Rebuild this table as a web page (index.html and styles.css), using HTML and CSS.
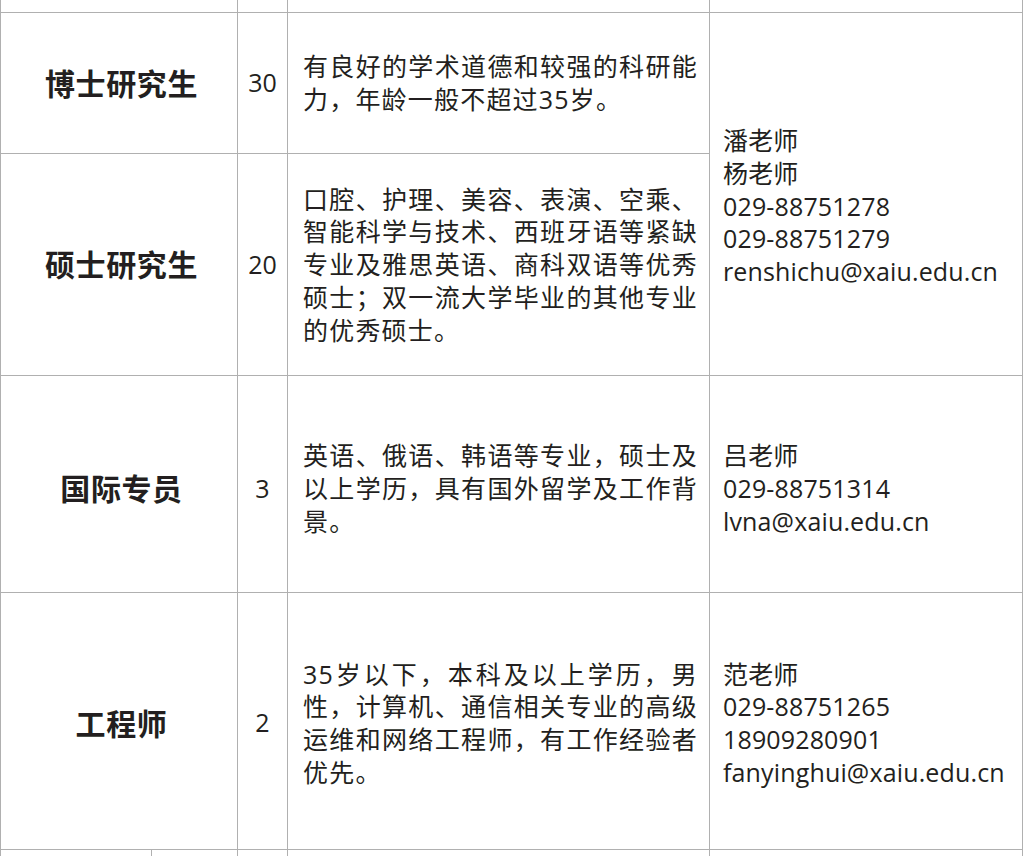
FILE: index.html
```html
<!DOCTYPE html>
<html lang="zh-CN">
<head>
<meta charset="utf-8">
<title>招聘岗位</title>
<link rel="stylesheet" href="styles.css">
</head>
<body>
<div class="sheet">
  <div class="cell span2 top"></div>
  <div class="cell top"></div>
  <div class="cell top"></div>
  <div class="cell top"></div>

  <div class="cell span2 title">博士研究生</div>
  <div class="cell num">30</div>
  <div class="cell req"><p>有良好的学术道德和较强的科研能力，年龄一般不超过35岁。</p></div>
  <div class="cell contact tall"><p>潘老师<br>杨老师<br>029-88751278<br>029-88751279<br>renshichu@xaiu.edu.cn</p></div>

  <div class="cell span2 title">硕士研究生</div>
  <div class="cell num">20</div>
  <div class="cell req"><p>口腔、护理、美容、表演、空乘、智能科学与技术、西班牙语等紧缺专业及雅思英语、商科双语等优秀硕士；双一流大学毕业的其他专业的优秀硕士。</p></div>

  <div class="cell span2 title r3">国际专员</div>
  <div class="cell num r3">3</div>
  <div class="cell req r3"><p>英语、俄语、韩语等专业，硕士及以上学历，具有国外留学及工作背景。</p></div>
  <div class="cell contact r3"><p>吕老师<br>029-88751314<br>lvna@xaiu.edu.cn</p></div>

  <div class="cell span2 title r4">工程师</div>
  <div class="cell num r4">2</div>
  <div class="cell req r4"><p>35岁以下，本科及以上学历，男性，计算机、通信相关专业的高级运维和网络工程师，有工作经验者优先。</p></div>
  <div class="cell contact r4"><p>范老师<br>029-88751265<br>18909280901<br>fanyinghui@xaiu.edu.cn</p></div>

  <div class="cell"></div>
  <div class="cell"></div>
  <div class="cell"></div>
  <div class="cell"></div>
  <div class="cell"></div>
</div>
</body>
</html>
```

FILE: styles.css
```css
* {
  box-sizing: border-box;
}

html, body {
  margin: 0;
  padding: 0;
  background: #ffffff;
}

body {
  width: 1024px;
  height: 856px;
  overflow: hidden;
  color: #231f20;
  font-family: "Open Sans", "Noto Sans CJK SC", sans-serif;
}

.sheet {
  display: grid;
  grid-template-columns: 151px 86px 50px 422px 313px;
  grid-template-rows: 13px 141px 222px 217px 257px 40px;
  border-left: 1px solid #b0b0b0;
  width: 1023px;
}

.cell {
  border-right: 1px solid #b0b0b0;
  border-bottom: 1px solid #b0b0b0;
  display: flex;
  flex-direction: column;
  justify-content: center;
  min-width: 0;
}

.span2 {
  grid-column: span 2;
}

.title {
  align-items: center;
  font-family: "Noto Sans CJK SC", sans-serif;
  font-weight: 700;
  font-size: 30px;
  letter-spacing: 0.6px;
  padding-left: 5px;
  padding-bottom: 3px;
}

.num {
  align-items: center;
  font-size: 25px;
  padding-bottom: 2px;
}

.req p,
.contact p {
  margin: 0;
  font-size: 25px;
  line-height: 32.7px;
}

.req {
  padding: 0 11px 0 15px;
}

.req p {
  text-align: justify;
  letter-spacing: 1.2px;
}

.contact {
  padding-left: 13px;
}

.contact p {
  white-space: nowrap;
  letter-spacing: 0.15px;
}

.tall {
  grid-row: span 2;
  padding-top: 24px;
}

.r3 {
  padding-top: 9px;
}

.r4 {
  padding-top: 4px;
}
```
